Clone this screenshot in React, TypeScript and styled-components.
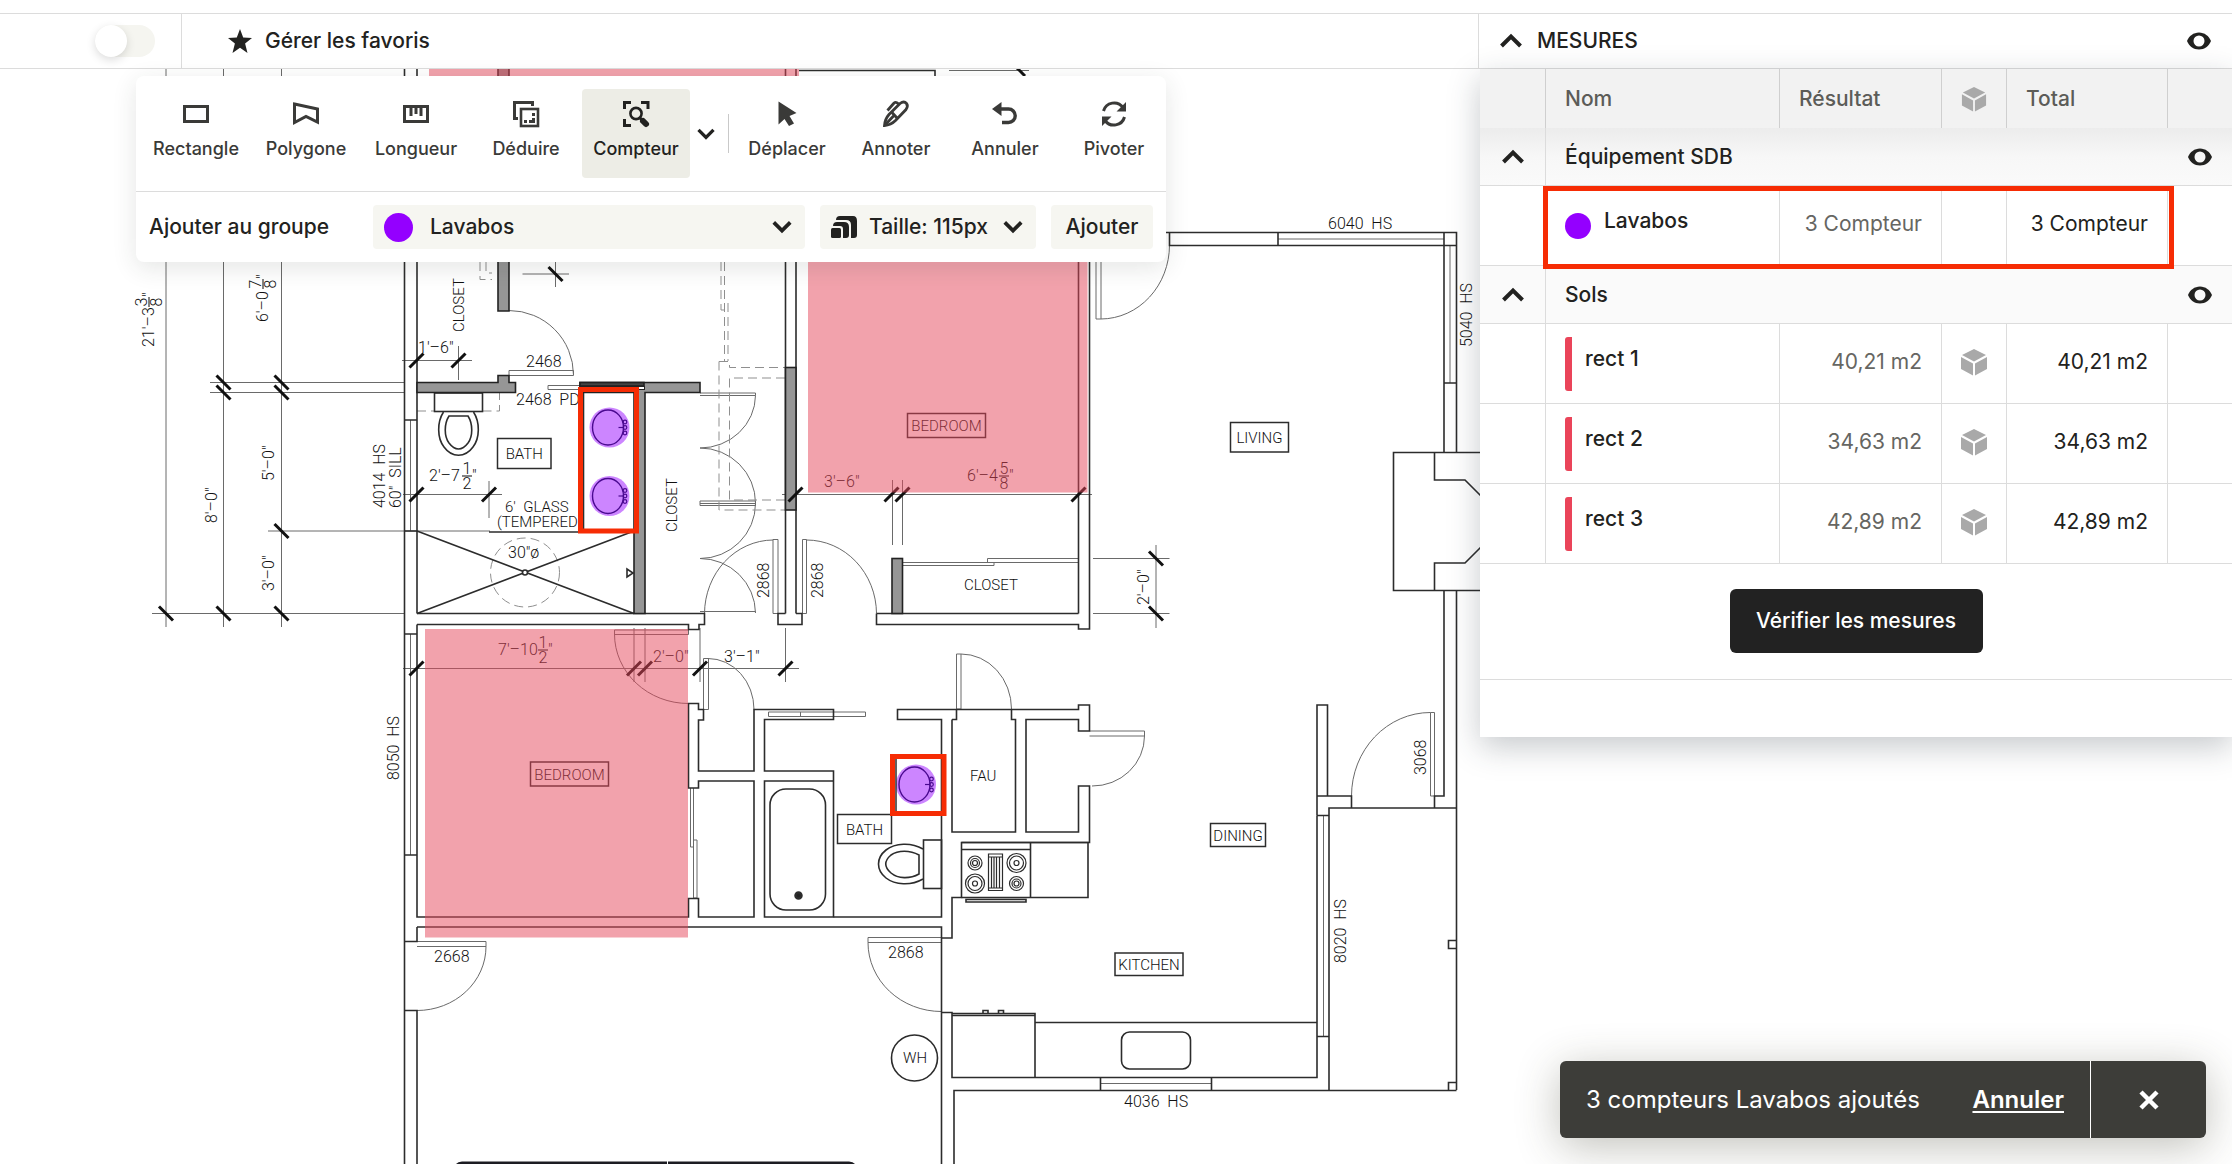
import React from "react";
import styled, { createGlobalStyle, css } from "styled-components";

const ink = "#222220";
const line = "#dcdcdc";
const purple = "#9400ff";
const alertRed = "#f62c04";
const uiFont = `Inter, "Liberation Sans", sans-serif`;

const GlobalStyle = createGlobalStyle`
  *, *::before, *::after { box-sizing: border-box; }
  body { margin: 0; background: #fff; color: ${ink}; font-family: ${uiFont}; font-size: 21px; line-height: 28px; }
  button, select, input { font: inherit; color: inherit; margin: 0; }
`;

/* ---------- page frame ---------- */

const Page = styled.div`
  display: flex;
  flex-direction: column;
  height: 100vh;
  overflow: hidden;
  padding-top: 13px;
`;

const TopBar = styled.header`
  display: flex;
  flex: none;
  height: 56px;
  border-top: 1px solid ${line};
  border-bottom: 1px solid ${line};
  background: #fff;
`;

const ToggleCell = styled.div`
  display: flex;
  align-items: center;
  justify-content: flex-end;
  width: 182px;
  padding-right: 26px;
  border-right: 1px solid ${line};
`;

const Toggle = styled.input`
  appearance: none;
  width: 60px;
  height: 32px;
  border-radius: 16px;
  background: #f5f5f0;
  cursor: pointer;
  &::before {
    content: "";
    display: block;
    width: 32px;
    height: 32px;
    border-radius: 50%;
    background: #fff;
    box-shadow: 0 3px 10px rgba(0, 0, 0, 0.14);
  }
`;

const PlainButton = styled.button`
  display: inline-flex;
  align-items: center;
  justify-content: center;
  padding: 0;
  border: 0;
  background: none;
  cursor: pointer;
`;

const FavouritesButton = styled(PlainButton)`
  gap: 12px;
  margin-left: 45px;
  font-weight: 500;
`;

const PanelHeading = styled.div`
  display: flex;
  align-items: center;
  width: 754px;
  margin-left: auto;
  padding: 0 20px;
  border-left: 1px solid ${line};
`;

const PanelTitle = styled.h2`
  flex: 1;
  margin: 0 0 0 14px;
  font-size: 21px;
  font-weight: 500;
`;

const Workspace = styled.main`
  position: relative;
  flex: 1;
  min-height: 0;
`;

/* ---------- tool panel ---------- */

const ToolPanel = styled.section`
  position: absolute;
  top: 7px;
  left: 136px;
  width: 1030px;
  border-radius: 8px;
  background: #fff;
  box-shadow: 0 6px 24px rgba(40, 50, 45, 0.12);
`;

const ToolRow = styled.div`
  display: flex;
  align-items: center;
  justify-content: space-between;
  padding: 13px 0 13px 6px;
  border-bottom: 1px solid ${line};
`;

const ToolGroup = styled.div<{ $gap: number }>`
  display: flex;
  gap: ${(p) => p.$gap}px;
`;

const Tool = styled.button<{ $width: number; $active?: boolean }>`
  display: flex;
  flex-direction: column;
  align-items: center;
  gap: 7px;
  width: ${(p) => p.$width}px;
  height: 89px;
  padding: 9px 0 0;
  border: 0;
  border-radius: 4px;
  background: ${(p) => (p.$active ? "#ededE6" : "none")};
  color: ${(p) => (p.$active ? ink : "#3a3a38")};
  font-size: 18px;
  font-weight: 500;
  line-height: 24px;
  white-space: nowrap;
  cursor: pointer;
`;

const Separator = styled.span`
  width: 1px;
  height: 39px;
  margin-left: 6px;
  background: #c9c9c9;
`;

const GroupRow = styled.div`
  display: flex;
  align-items: center;
  gap: 15px;
  padding: 13px;
  font-weight: 500;
`;

const GroupLabel = styled.label`
  width: 209px;
  white-space: nowrap;
`;

const Field = styled.div<{ $width?: number }>`
  position: relative;
  flex: ${(p) => (p.$width ? `0 0 ${p.$width}px` : "1")};
`;

const FieldIcon = styled.span`
  position: absolute;
  top: 0;
  bottom: 0;
  left: 11px;
  display: flex;
  align-items: center;
  pointer-events: none;
`;

const FieldChevron = styled(FieldIcon)`
  left: auto;
  right: 12px;
`;

const Select = styled.select<{ $indent: number }>`
  appearance: none;
  width: 100%;
  height: 44px;
  padding: 0 40px 0 ${(p) => p.$indent}px;
  border: 0;
  border-radius: 4px;
  background: #f6f6f1;
  font-weight: 500;
  cursor: pointer;
`;

const AddButton = styled.button`
  width: 102px;
  height: 44px;
  padding: 0;
  border: 0;
  border-radius: 4px;
  background: #f6f6f1;
  font-weight: 500;
  cursor: pointer;
`;

const Dot = styled.span<{ $size: number }>`
  flex: none;
  width: ${(p) => p.$size}px;
  height: ${(p) => p.$size}px;
  border-radius: 50%;
  background: ${purple};
`;

/* ---------- measures panel ---------- */

const MeasuresPanel = styled.aside`
  position: absolute;
  top: 0;
  right: 0;
  width: 752px;
  background: #fff;
  box-shadow: 0 10px 30px rgba(40, 50, 60, 0.26);
`;

const Table = styled.table`
  width: 100%;
  table-layout: fixed;
  border-collapse: separate;
  border-spacing: 0;
`;

const divider = css`
  border-left: 1px solid ${line};
`;

const HeadRow = styled.tr`
  height: 59px;
  background: #f2f2f2;
`;

const HeadCell = styled.th`
  ${divider}
  border-left-color: #cfcfcf;
  padding: 0 19px;
  color: #5c5c58;
  font-weight: 500;
  text-align: left;
  &:first-child { border-left: 0; }
`;

const GroupTr = styled.tr<{ $shaded?: boolean }>`
  height: 58px;
  background: ${(p) => (p.$shaded ? "linear-gradient(#ececec, #f7f7f7 50%, #fafafa)" : "#fafafa")};
`;

const GroupCell = styled.td`
  padding: 0;
  border-bottom: 1px solid ${line};
  text-align: center;
`;

const GroupName = styled.th`
  ${divider}
  padding: 0 19px;
  border-bottom: 1px solid ${line};
  font-weight: 500;
  text-align: left;
`;

const ItemTr = styled.tr`
  position: relative;
  height: 80px;
`;

const Cell = styled.td<{ $muted?: boolean }>`
  ${divider}
  padding: 0 19px 3px 0;
  border-bottom: 1px solid ${line};
  color: ${(p) => (p.$muted ? "#666662" : ink)};
  font-size: 21px;
  text-align: right;
  white-space: nowrap;
  &:first-child { border-left: 0; }
`;

const IconCell = styled(Cell)`
  padding: 0 0 3px;
`;

const NameCell = styled.th`
  ${divider}
  padding: 0 19px;
  border-bottom: 1px solid ${line};
  font-weight: 500;
  text-align: left;
`;

const NameLine = styled.div`
  display: flex;
  align-items: center;
  gap: 13px;
`;

const NameText = styled.span`
  padding-bottom: 9px;
`;

const Bar = styled.span`
  width: 7px;
  height: 54px;
  border-radius: 3px 0 0 3px;
  background: #ea4459;
`;

const Highlight = styled.span`
  position: absolute;
  inset: 0 58px -3px 63px;
  border: 5px solid ${alertRed};
  pointer-events: none;
`;

const IconWrap = styled.span`
  display: flex;
  align-items: center;
  justify-content: center;
`;

const Actions = styled.div`
  display: flex;
  justify-content: center;
  padding: 25px 0 26px;
  border-bottom: 1px solid ${line};
`;

const VerifyButton = styled.button`
  width: 253px;
  height: 64px;
  padding: 0;
  border: 0;
  border-radius: 6px;
  background: #222222;
  color: #fff;
  font-weight: 500;
  cursor: pointer;
`;

const PanelFoot = styled.div`
  height: 57px;
`;

/* ---------- toast ---------- */

const Toast = styled.div`
  position: absolute;
  right: 26px;
  bottom: 26px;
  display: flex;
  align-items: center;
  width: 646px;
  height: 77px;
  padding-left: 26px;
  border-radius: 6px;
  background: #3d3d39;
  color: #fff;
  font-size: 24px;
  box-shadow: 0 8px 44px rgba(60, 60, 40, 0.32);
`;

const UndoButton = styled(PlainButton)`
  margin: 0 26px 0 auto;
  font-weight: 600;
  text-decoration: underline;
  text-decoration-thickness: 2px;
  text-underline-offset: 3px;
`;

const CloseButton = styled(PlainButton)`
  width: 116px;
  height: 100%;
  border-left: 1px solid #fff;
`;

/* ---------- icons ---------- */

const Chevron = ({ up, size = 24 }: { up?: boolean; size?: number }) => (
  <svg width={size} height={size} viewBox="0 0 24 24" fill="none" stroke={ink} strokeWidth="4" aria-hidden>
    <path d={up ? "M2.5 17 L12 7.5 L21.5 17" : "M3 7 L12 16 L21 7"} />
  </svg>
);

const Eye = () => (
  <svg width="26" height="20" viewBox="0 0 26 20" aria-hidden>
    <path
      fillRule="evenodd"
      fill={ink}
      d="M13 1.500C7.500 1.500 3 5 1 10c2 5 6.500 8.500 12 8.500S23 15 25 10C23 5 18.500 1.500 13 1.500zM13 15.500a5.500 5.500 0 1 1 0-11 5.500 5.500 0 0 1 0 11z"
    />
  </svg>
);

const Cube = () => (
  <svg width="28" height="28" viewBox="0 0 28 28" fill="#a9a9a9" aria-hidden>
    <path d="M14 1 L26 7 L14 13.500 L2 7z M1 9 L13 15.500 V27.500 L1 21z M27 9 L15 15.500 V27.500 L27 21z" />
  </svg>
);

const Star = () => (
  <svg width="26" height="26" viewBox="0 0 26 26" fill={ink} aria-hidden>
    <path d="M13 1 L16.200 9.500 L25 9.900 L18.100 15.500 L20.500 25 L13 19.800 L5.500 25 L7.900 15.500 L1 9.900 L9.800 9.500z" />
  </svg>
);

const SizeIcon = () => (
  <svg width="26" height="24" viewBox="0 0 26 24" fill={ink} aria-hidden>
    <rect x="0" y="13" width="10" height="10" rx="1.500" />
    <path d="M2 11 Q2 7 6 7 H13 Q18 7 18 12 V20 Q18 23 15 23 H12 V14 Q12 11 9 11z" />
    <path d="M5 5 Q5 1 9 1 H22 Q26 1 26 6 V20 Q26 23 23 23 H20 V10 Q20 5 15 5z" />
  </svg>
);

const toolIcons: Record<string, React.ReactNode> = {
  Rectangle: <rect x="4.500" y="8.500" width="23" height="15" />,
  Polygone: <path d="M4.500 6 L27.500 11 V24 L16 18.500 L4.500 24.500z" />,
  Longueur: (
    <>
      <rect x="4.500" y="8.500" width="23" height="15" />
      <path d="M11 9 V18 M16 9 V16 M21 9 V18" />
    </>
  ),
  Déduire: (
    <>
      <path d="M8 20.500 H4.500 V4.500 H22.500 V8" />
      <rect x="11" y="11" width="17" height="17" strokeWidth="2.600" />
      <g fill="currentColor" stroke="none">
        <rect x="22" y="15" width="3" height="3" />
        <rect x="22" y="20" width="3" height="5" />
        <rect x="14" y="22" width="3" height="3" />
        <rect x="19" y="22" width="4" height="3" />
      </g>
    </>
  ),
  Compteur: (
    <>
      <path d="M4.500 11 V4.500 H11 M21 4.500 H28 V11 M4.500 21 V27.500 H11" />
      <circle cx="16" cy="15.500" r="5.600" strokeWidth="2.600" />
      <path d="M19.500 19.500 L24 24" />
      <path d="M23 23 L26 26" strokeWidth="6" strokeLinecap="round" />
    </>
  ),
  Déplacer: <path d="M7.500 3.500 V26.500 L13.500 21 L18 28 L23 25.500 L18.500 18 L25.500 15z" fill="currentColor" stroke="none" />,
  Annoter: (
    <g strokeWidth="2.800">
      <path d="M4.500 27.500 Q5 21 9 16.500 L20 5.500 Q24 2.500 26.500 5.500 Q28.500 8 26 11.500 L15.500 22.500 Q11 27 4.500 27.500z" />
      <path d="M5 27 L13.500 18 M11.500 14 L17.500 20.500" />
      <path d="M7.500 12.500 L14 5 Q16 3.500 18.500 6" />
    </g>
  ),
  Annuler: (
    <>
      <path d="M10 11 H19.500 A6.250 6.250 0 0 1 19.500 24.500 H13" strokeWidth="3.400" />
      <path d="M3 11 L12.500 4 V18z" fill="currentColor" stroke="none" />
    </>
  ),
  Pivoter: (
    <>
      <path d="M5.500 13 A11 11 0 0 1 25 9.500 M26.500 19 A11 11 0 0 1 7 22.500" />
      <path d="M28 4 V13.500 H18.500z M4 28 V18.500 H13.500z" fill="currentColor" stroke="none" />
    </>
  ),
};

const ToolIcon = ({ name }: { name: string }) => (
  <svg width="32" height="32" viewBox="0 0 32 32" fill="none" stroke="currentColor" strokeWidth="3" aria-hidden>
    {toolIcons[name]}
  </svg>
);

/* ---------- floor plan ---------- */

const PlanSvg = styled.svg`
  position: absolute;
  inset: 0;
  width: 100%;
  height: 100%;
  fill: none;
  stroke: none;
`;

const Walls = styled.g`
  stroke: #2c2c2c;
  stroke-width: 1.6;
`;

const Thin = styled.g`
  stroke: #6a6a6a;
  stroke-width: 1;
`;

const Dashed = styled.g`
  stroke: #8f8f8f;
  stroke-dasharray: 9 5;
`;

const Ticks = styled.g`
  stroke: #111;
  stroke-width: 3;
`;

const Solid = styled.g`
  fill: #969696;
  stroke: #222;
  stroke-width: 1.6;
`;

const PlanText = styled.text<{ $size?: number }>`
  font-family: Roboto, "Liberation Sans", sans-serif;
  font-weight: 300;
  font-size: ${(p) => p.$size ?? 16}px;
  fill: #111;
  white-space: pre;
`;

const Across = ({ x, y, children, size }: { x: number; y: number; children: string; size?: number }) => (
  <PlanText x={x} y={y} $size={size}>{children}</PlanText>
);

const Up = ({ x, y, children, size }: { x: number; y: number; children: string; size?: number }) => (
  <PlanText transform={`translate(${x} ${y}) rotate(-90)`} $size={size}>{children}</PlanText>
);

const Fraction = ({ x, y, top, bottom, up }: { x: number; y: number; top: string; bottom: string; up?: boolean }) => (
  <g transform={`translate(${x} ${y})${up ? " rotate(-90)" : ""}`}>
    <PlanText x={0} y={-7} textAnchor="middle">{top}</PlanText>
    <path d="M-5 -5 H5" stroke="#333" strokeWidth="1.200" />
    <PlanText x={0} y={8} textAnchor="middle">{bottom}</PlanText>
    <PlanText x={5} y={0}>″</PlanText>
  </g>
);

const RoomTag = ({ x, y, w, h, children }: { x: number; y: number; w: number; h: number; children: string }) => (
  <g>
    <rect x={x} y={y} width={w} height={h} stroke="#2c2c2c" strokeWidth="1.500" />
    <PlanText x={x + w / 2} y={y + h / 2 + 5.5} textAnchor="middle" $size={15}>{children}</PlanText>
  </g>
);

const fallingTicks = [
  [166, 613.5], [223.5, 613.5], [281.5, 613.5], [223.5, 382.5], [281.5, 382.5],
  [223.5, 392.5], [281.5, 392.5], [281.5, 531], [555.5, 274], [1156, 558.5], [1156, 613.5], [1018, 69],
];
const risingTicks = [
  [416.5, 360.5], [458.5, 360.5], [416.5, 494.5], [489, 494.5], [795.5, 494.5], [891.5, 494.5],
  [902.5, 494.5], [1078.5, 494.5], [416.5, 668.5], [634, 668.5], [645, 668.5], [700, 668.5], [785.5, 668.5],
];
const basins = [[609.5, 427.5], [609.5, 496], [916, 784.5]];
const burners = [[975, 863, 7], [1016.5, 863, 9.5], [975, 883.5, 9.5], [1016.5, 883.5, 7]];

const FloorPlan = () => (
  <PlanSvg viewBox="0 69 2232 1095" preserveAspectRatio="xMinYMin slice" role="img" aria-label="Plan">
    <Thin>
      {/* dimension lines */}
      <path d="M166 69 V627 M223.500 69 V627 M281.500 69 V627 M152 613.500 H404 M210 382.500 H404 M210 392.500 H404 M268 531 H490" />
      <path d="M402 360.500 H472 M458.500 346 V380 M522.500 274 H569 M555.500 262 V287 M403 494.500 H502 M489 481 V518" />
      <path d="M782 494.500 H1092 M892.500 480 V545 M902.500 480 V545 M1093 558.500 H1169.500 M1093 613.500 H1169.500 M1156 545 V628" />
      <path d="M403 668.500 H799 M634 628 V682 M645 628 V682 M700 628 V682 M785.500 628 V682 M949 70.500 H1029" />
      {/* doors and sliding leaves */}
      <path d="M509 370.500 H573.500 V375.500 H509z M509 310.500 A64.500 64.500 0 0 1 573.500 375" />
      <path d="M548 385.500 H580 M548 389.500 H580 M548 385.500 V389.500" />
      <path d="M700 393 H755.500 V395.500 H700 M755.500 395.500 A55.500 53 0 0 1 700 448 A55.500 55 0 0 1 755.500 503 M700 501 H755.500 V505.500 H700z M700 503.500 H755.500 A55.500 55 0 0 1 700 558.500 A55.500 55 0 0 1 755.500 613 M700 611.500 H755.500" />
      <path d="M773 539.500 H778 V613.500 H773z M773 540 A69 74 0 0 0 704.500 613.500 M802.500 539.500 H806.500 V613.500 H802.500z M806.500 540 A70 74 0 0 1 876.500 613.500" />
      <path d="M902.500 562.500 H994 V565.500 H902.500 M1078.500 558.500 H987.500 V562.500 H1078.500" />
      <path d="M1096 240 H1101 V319 H1096z M1101 319 A69 74 0 0 0 1169.500 245" />
      <path d="M614.500 630 H688.500 V634.500 H614.500z M614.500 634 A74 69.500 0 0 0 688.500 703.500" />
      <path d="M703.500 658.500 H708.500 V709.500 H703.500z M708 658.500 A46 51 0 0 1 754 709.500" />
      <path d="M690.500 788 V847 H693.500 V788 M693.500 840 H697 V898 H693.500z" />
      <path d="M417 941.500 H486 V946.500 H417 M486 946.500 A69 64 0 0 1 417 1010.500" />
      <path d="M956.500 654 H961 V709 H956.500z M961 654 A50.500 55 0 0 1 1011.500 709 M1089.500 731 H1144.500 V736 H1089.500 M1144.500 736 A52 50 0 0 1 1092 786" />
      <path d="M941.500 937.500 H868 V942.500 H941.500 M868 942.500 A73.500 69 0 0 0 941.500 1011.500" />
      <path d="M768.500 712 H865.500 V716.500 H768.500z M800.500 712 V716.500" />
      <path d="M1430.500 712.500 H1434.500 V796 H1430.500z M1430.500 712.500 A79 83.500 0 0 0 1351.500 796" />
      {/* window centre lines */}
      <path d="M410.500 420 V531 M410.500 634 V855 M1278 239 H1444 M1450 245 V383 M1323.500 815 V1036 M1100.500 1083.500 H1211.500" />
      <Dashed>
        <path d="M721 262 V310 H726 M724.500 262 V303 M724.500 303 V361 M728 303 V361 M719 361.500 H729.500 V367.500 H785 M719 361.500 V510 H785 M785 378 H729.500 V500 H785" />
        <path d="M417 411 H434 M482.500 411 H499.500 V393 M480 262 V279.500 H492 M486 262 V273 H492" />
        <circle cx="525" cy="572.500" r="34.500" />
      </Dashed>
    </Thin>

    <Walls>
      {/* outer left wall */}
      <path d="M404.500 69 V1164 M417 69 V613.500 M404.500 420 H417 M404.500 531 H417 M404.500 634 H417 M404.500 855 H417 M404.500 1010.500 H417 V1164 M404.500 941.500 H417 V927" />
      {/* upper rooms */}
      <path d="M785.500 69 V613.500 M796 69 V613.500 M799 70.500 H935 V76 M417 613.500 H704.500 V624.500 H699 V629.500 H688.500 V624.500 H417" />
      <path d="M785.500 613.500 H778 V624.500 H802 V613.500 H796 M876.500 613.500 H1078.500 M876.500 613.500 V624.500 H1078.500 V629 H1089.500 V240 M1078.500 240 V613.500" />
      <path d="M583.500 393 V531 M489 532 H634 M417 531 L634 613.500 M634 531 L417 613.500 M627 569 V577 L633 573z" />
      <circle cx="525" cy="572.500" r="2.500" fill="#fff" />
      {/* living room */}
      <path d="M1166 232.500 H1456.500 V452.500 M1169.500 232.500 V245.500 H1456.500 M1278 232.500 V245.500 M1444 232.500 V452.500 M1444 383 H1456.500" />
      <path d="M1482 452.500 H1393.500 V590.500 H1482 M1434.500 452.500 V480 H1465 L1482 497 M1434.500 590.500 V563 H1465 L1482 546 M1444 590.500 V796 H1434.500 V808 M1456.500 590.500 V1090" />
      {/* lower left bedroom */}
      <path d="M417 624.500 V917 H688.500 V898.500 H698.500 V917 H754 V781 H698.500 V788 H688.500 V703.500 H698.500 V709.500 H703.500 V720 H698.500 V771 H754 V709.500 H833.500 V719.500 H764.500 V771 H833.500 V917 H764.500 V781 H833.500" />
      <path d="M833.500 917 H941.500 V719.500 H897.500 V709.500 H1078.500 V705 H1089.500 V731 H1078.500 V719.500 H1026 V832 H1078.500 V786 H1089.500 V842.500 H961.500 V897.500 H952 V938 H941.500" />
      <path d="M952 719.500 H956.500 V709.500 M952 719.500 V832 H1015.500 V719.500 H1011.500 V709.500 M417 927 H941.500 V1164" />
      {/* kitchen and dining */}
      <path d="M961.500 842.500 H1088 V897.500 H961.500 M1030.500 843 V897.500 M961.500 849.500 H1030.500 M966 899.500 H1026 V902 H966z" />
      <path d="M941.500 1012.500 H952 V1077.500 H1317 V815.500 M952 1013.500 H1035 V1077.500 M952 1015.500 H1035 M983 1013 V1010.500 H988 V1013 M998.500 1013 V1010.500 H1003.500 V1013 M1035 1022.500 H1317" />
      <path d="M954 1164 V1090.500 H1456.500 M1100.500 1077.500 V1090 M1211.500 1077.500 V1090 M1317 815.500 V705 H1327.500 V796 M1317 796 H1351.500 V808 M1317 815.500 H1329 M1329 1090 V808 H1456.500 M1317 1036.500 H1329" />
      <path d="M1456.500 940.500 H1448.500 V948.500 H1456.500 M1456.500 1082.500 H1448.500 V1090" />
      <rect x="1121.500" y="1032" width="69" height="37" rx="8" />
      <circle cx="914.500" cy="1058" r="23" />
      {/* fixtures */}
      <rect x="770" y="789" width="55.500" height="121" rx="16" />
      <circle cx="798.500" cy="895.500" r="3" fill="#222" strokeWidth="2.500" />
      <rect x="434.500" y="393" width="48" height="18.500" />
      <path d="M443.500 412 C437 422 437 438 444 447 C452 458 465 458 473 447 C480 438 480 422 473.500 412" />
      <path d="M449 416 H468 C473 424 473 436 468 443 C462 451 455 451 449 443 C444 436 444 424 449 416z" />
      <rect x="923.500" y="840" width="18" height="48.500" />
      <path d="M923 849 C911 842 895 843 886 850 C876 858 876 870 886 878 C895 885 911 886 923 879" />
      <path d="M919 855 V874 C910 879 898 879 891 873 C884 867 884 861 891 855 C898 850 910 850 919 855z" />
      <g strokeWidth="1.200">
        {burners.map(([cx, cy, r]) => (
          <g key={`${cx}-${cy}`}>
            <circle cx={cx} cy={cy} r={r} />
            <circle cx={cx} cy={cy} r={r - 2.5} />
            <circle cx={cx} cy={cy} r="2.500" />
          </g>
        ))}
        <path d="M988.500 854 H1002.500 V890.500 H988.500z M988.500 857 H1002.500 M988.500 888 H1002.500 M991.500 857 V888 M994 857 V888 M996.500 857 V888 M999.500 857 V888" />
      </g>
    </Walls>

    <Solid>
      <path d="M498 69 V311 H509 V69" />
      <path d="M417 382.500 H498 V375.500 H509 V382.500 H515.500 V392.500 H417z" />
      <path d="M580 382.500 H700 V392.500 H645 V613.500 H634 V392.500 H580z" />
      <rect x="580" y="382.500" width="64" height="3.500" fill="#444" />
      <rect x="580" y="386.500" width="64.500" height="3" fill="#fff" strokeWidth="1" />
      <rect x="785.500" y="367.500" width="10.500" height="142.500" />
      <rect x="892" y="558.500" width="10.500" height="55" />
    </Solid>

    <Ticks>
      {fallingTicks.map(([x, y]) => <path key={`f${x}-${y}`} d={`M${x - 7} ${y - 7} L${x + 7} ${y + 7}`} />)}
      {risingTicks.map(([x, y]) => <path key={`r${x}-${y}`} d={`M${x - 7} ${y + 7} L${x + 7} ${y - 7}`} />)}
    </Ticks>

    <Up x={154} y={347}>21'–3</Up>
    <Fraction x={154} y={302} top="3" bottom="8" up />
    <Up x={268} y={322}>6'–0</Up>
    <Fraction x={268} y={284} top="7" bottom="8" up />
    <Up x={274} y={481}>5'–0"</Up>
    <Up x={217} y={523}>8'–0"</Up>
    <Up x={274} y={591}>3'–0"</Up>
    <Up x={385} y={508}>4014  HS</Up>
    <Up x={401} y={508}>60"  SILL</Up>
    <Up x={464} y={332} size={15}>CLOSET</Up>
    <Up x={677} y={532} size={15}>CLOSET</Up>
    <Up x={769} y={598}>2868</Up>
    <Up x={823} y={598}>2868</Up>
    <Up x={1149} y={605}>2'–0"</Up>
    <Up x={1472} y={347}>5040  HS</Up>
    <Up x={399} y={780}>8050  HS</Up>
    <Up x={1426} y={775}>3068</Up>
    <Up x={1346} y={963}>8020  HS</Up>
    <Across x={418} y={353}>1'–6"</Across>
    <Across x={526} y={367}>2468</Across>
    <Across x={516} y={405}>2468  PD</Across>
    <Across x={429} y={481}>2'–7</Across>
    <Fraction x={467} y={481} top="1" bottom="2" />
    <Across x={505} y={512} size={15}>6'  GLASS</Across>
    <Across x={497} y={527} size={15}>(TEMPERED)</Across>
    <Across x={508} y={558}>30"ø</Across>
    <Across x={824} y={487}>3'–6"</Across>
    <Across x={967} y={481}>6'–4</Across>
    <Fraction x={1004} y={481} top="5" bottom="8" />
    <Across x={964} y={590} size={15}>CLOSET</Across>
    <Across x={498} y={655}>7'–10</Across>
    <Fraction x={543} y={655} top="1" bottom="2" />
    <Across x={653} y={662}>2'–0"</Across>
    <Across x={724} y={662}>3'–1"</Across>
    <Across x={1328} y={229}>6040  HS</Across>
    <Across x={434} y={962}>2668</Across>
    <Across x={888} y={958}>2868</Across>
    <Across x={1124} y={1107}>4036  HS</Across>
    <Across x={970} y={781} size={15}>FAU</Across>
    <Across x={903} y={1063} size={15}>WH</Across>

    <RoomTag x={497.5} y={438.5} w={53.500} h={30}>BATH</RoomTag>
    <RoomTag x={837.5} y={814.5} w={54} h={29}>BATH</RoomTag>
    <RoomTag x={907.5} y={413.5} w={78} h={24}>BEDROOM</RoomTag>
    <RoomTag x={530.5} y={762} w={78} h={24}>BEDROOM</RoomTag>
    <RoomTag x={1230.5} y={422.5} w={58} h={29.500}>LIVING</RoomTag>
    <RoomTag x={1210.5} y={823.5} w={55} h={23}>DINING</RoomTag>
    <RoomTag x={1115} y={953} w={68} h={22.500}>KITCHEN</RoomTag>

    {/* measured areas */}
    <g fill="#e6455a" fillOpacity="0.500">
      <rect x="429" y="69" width="370" height="8" />
      <rect x="808" y="240" width="279.500" height="252.500" />
      <rect x="425" y="629" width="263" height="308.500" />
    </g>

    {/* counted wash basins */}
    {basins.map(([cx, cy]) => (
      <g key={`${cx}-${cy}`}>
        <circle cx={cx} cy={cy} r="20" fill={purple} fillOpacity="0.480" />
        <ellipse cx={cx - 1.5} cy={cy} rx="15.500" ry="17.500" stroke="#4a0a90" strokeWidth="1.400" />
        <g stroke="#4a0a90" strokeWidth="1.200">
          <path d={`M${cx + 9} ${cy} H${cx + 14}`} />
          <circle cx={cx + 15.5} cy={cy - 5.5} r="1.800" />
          <circle cx={cx + 15.5} cy={cy} r="1.800" />
          <circle cx={cx + 15.5} cy={cy + 5.5} r="1.800" />
        </g>
      </g>
    ))}
    <path d="M896 758 V811" stroke="#2c2c2c" strokeWidth="1.500" />
    <g stroke={alertRed} strokeWidth="5">
      <rect x="580.500" y="389.500" width="56" height="141.500" />
      <rect x="892.500" y="756.500" width="51.500" height="57" />
    </g>

    {/* page control peeking in from the bottom edge */}
    <path d="M456 1164 Q458 1161.500 462 1161.500 H849 Q853 1161.500 855 1164z" fill="#1c1c22" />
    <path d="M667.500 1161 V1164" stroke="#fff" />
  </PlanSvg>
);

/* ---------- data ---------- */

const drawTools = ["Rectangle", "Polygone", "Longueur", "Déduire", "Compteur"];
const editTools = ["Déplacer", "Annoter", "Annuler", "Pivoter"];
const floors = [
  { name: "rect 1", value: "40,21 m2" },
  { name: "rect 2", value: "34,63 m2" },
  { name: "rect 3", value: "42,89 m2" },
];

const GroupHeader = ({ name, shaded }: { name: string; shaded?: boolean }) => (
  <GroupTr $shaded={shaded}>
    <GroupCell>
      <IconWrap><PlainButton aria-label={`Replier ${name}`}><Chevron up /></PlainButton></IconWrap>
    </GroupCell>
    <GroupName colSpan={4} scope="rowgroup">{name}</GroupName>
    <GroupCell>
      <IconWrap><PlainButton aria-label={`Afficher ${name}`}><Eye /></PlainButton></IconWrap>
    </GroupCell>
  </GroupTr>
);

export default function App() {
  return (
    <>
      <GlobalStyle />
      <Page>
        <TopBar>
          <ToggleCell>
            <Toggle type="checkbox" role="switch" aria-label="Activer" />
          </ToggleCell>
          <FavouritesButton><Star />Gérer les favoris</FavouritesButton>
          <PanelHeading>
            <PlainButton aria-label="Replier les mesures"><Chevron up /></PlainButton>
            <PanelTitle>MESURES</PanelTitle>
            <PlainButton aria-label="Afficher les mesures"><Eye /></PlainButton>
          </PanelHeading>
        </TopBar>

        <Workspace>
          <FloorPlan />

          <ToolPanel>
            <ToolRow>
              <ToolGroup $gap={2}>
                {drawTools.map((name) => (
                  <Tool key={name} $width={108} $active={name === "Compteur"}>
                    <ToolIcon name={name} />
                    {name}
                  </Tool>
                ))}
              </ToolGroup>
              <PlainButton aria-label="Autres compteurs"><Chevron size={20} /></PlainButton>
              <Separator />
              <ToolGroup $gap={5}>
                {editTools.map((name) => (
                  <Tool key={name} $width={104}>
                    <ToolIcon name={name} />
                    {name}
                  </Tool>
                ))}
              </ToolGroup>
            </ToolRow>
            <GroupRow>
              <GroupLabel htmlFor="group">Ajouter au groupe</GroupLabel>
              <Field>
                <FieldIcon><Dot $size={29} /></FieldIcon>
                <Select id="group" $indent={57} defaultValue="Lavabos">
                  <option>Lavabos</option>
                </Select>
                <FieldChevron><Chevron size={22} /></FieldChevron>
              </Field>
              <Field $width={216}>
                <FieldIcon><SizeIcon /></FieldIcon>
                <Select aria-label="Taille" $indent={49}>
                  <option>Taille: 115px</option>
                </Select>
                <FieldChevron><Chevron size={22} /></FieldChevron>
              </Field>
              <AddButton>Ajouter</AddButton>
            </GroupRow>
          </ToolPanel>

          <MeasuresPanel>
            <Table>
              <colgroup>
                <col style={{ width: 65 }} />
                <col style={{ width: 234 }} />
                <col style={{ width: 162 }} />
                <col style={{ width: 65 }} />
                <col style={{ width: 161 }} />
                <col />
              </colgroup>
              <thead>
                <HeadRow>
                  <HeadCell as="td" />
                  <HeadCell scope="col">Nom</HeadCell>
                  <HeadCell scope="col">Résultat</HeadCell>
                  <HeadCell scope="col" aria-label="Volume"><IconWrap><Cube /></IconWrap></HeadCell>
                  <HeadCell scope="col">Total</HeadCell>
                  <HeadCell as="td" />
                </HeadRow>
              </thead>
              <tbody>
                <GroupHeader name="Équipement SDB" shaded />
                <ItemTr>
                  <Cell />
                  <NameCell scope="row">
                    <NameLine><Dot $size={26} /><NameText>Lavabos</NameText></NameLine>
                  </NameCell>
                  <Cell $muted>3 Compteur</Cell>
                  <Cell />
                  <Cell>3 Compteur</Cell>
                  <Cell><Highlight /></Cell>
                </ItemTr>
              </tbody>
              <tbody>
                <GroupHeader name="Sols" />
                {floors.map((row) => (
                  <ItemTr key={row.name}>
                    <Cell />
                    <NameCell scope="row">
                      <NameLine><Bar /><NameText>{row.name}</NameText></NameLine>
                    </NameCell>
                    <Cell $muted>{row.value}</Cell>
                    <IconCell><IconWrap><Cube /></IconWrap></IconCell>
                    <Cell>{row.value}</Cell>
                    <Cell />
                  </ItemTr>
                ))}
              </tbody>
            </Table>
            <Actions><VerifyButton>Vérifier les mesures</VerifyButton></Actions>
            <PanelFoot />
          </MeasuresPanel>

          <Toast role="status">
            3 compteurs Lavabos ajoutés
            <UndoButton>Annuler</UndoButton>
            <CloseButton aria-label="Fermer">
              <svg width="20" height="20" viewBox="0 0 20 20" stroke="#fff" strokeWidth="4.500" aria-hidden>
                <path d="M2 2 L18 18 M18 2 L2 18" />
              </svg>
            </CloseButton>
          </Toast>
        </Workspace>
      </Page>
    </>
  );
}
